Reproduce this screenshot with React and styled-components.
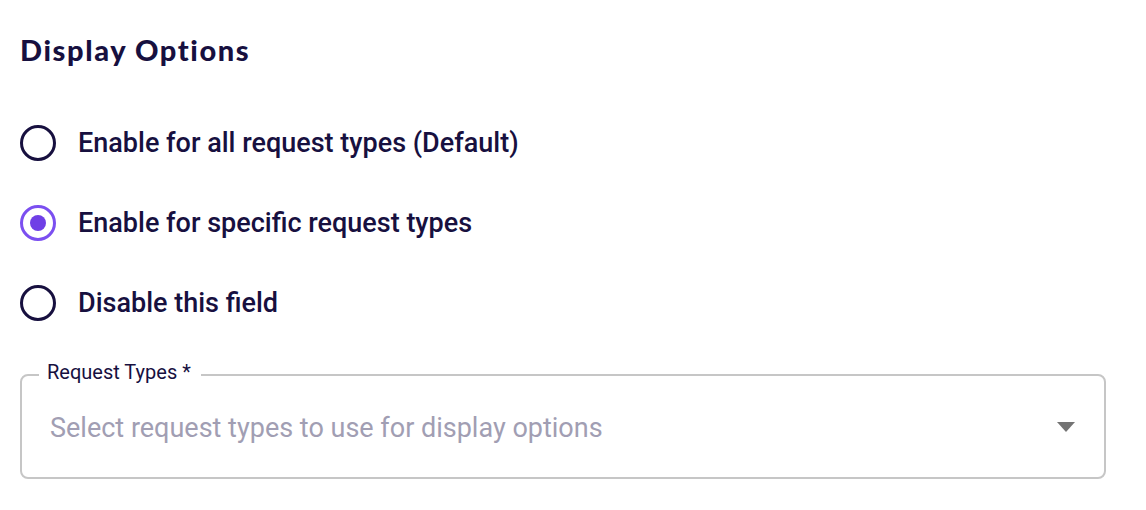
import React, { useState } from "react";
import styled, { createGlobalStyle } from "styled-components";

const GlobalStyle = createGlobalStyle`
  body {
    margin: 0;
    background: #ffffff;
    font-family: Roboto, "Liberation Sans", sans-serif;
  }
`;

const Page = styled.div`
  width: 1146px;
  padding: 30px 40px 0 20px;
  box-sizing: border-box;
`;

const Title = styled.h2`
  margin: 0;
  font-family: Lato, "DejaVu Sans", sans-serif;
  font-weight: 900;
  font-size: 29px;
  letter-spacing: 1.6px;
  line-height: 40px;
  color: #17103f;
`;

const RadioList = styled.div`
  display: flex;
  flex-direction: column;
  gap: 44px;
  margin-top: 55px;
`;

const RadioRow = styled.label`
  display: flex;
  align-items: center;
  gap: 22px;
  height: 36px;
  cursor: pointer;
`;

const RadioCircle = styled.span`
  width: 36px;
  height: 36px;
  box-sizing: border-box;
  border-radius: 50%;
  border: 3px solid ${(p) => (p.$checked ? "#7b4ff0" : "#17103f")};
  display: flex;
  align-items: center;
  justify-content: center;
  flex-shrink: 0;

  &::after {
    content: "";
    width: 16px;
    height: 16px;
    border-radius: 50%;
    background: #6f3fe6;
    display: ${(p) => (p.$checked ? "block" : "none")};
  }
`;

const RadioText = styled.span`
  font-size: 27px;
  font-weight: 500;
  color: #17103f;
`;

const Field = styled.fieldset`
  margin: 38px 0 0 0;
  padding: 0 26px 0 28px;
  height: 120px;
  box-sizing: border-box;
  border: 2px solid #c6c6c6;
  border-radius: 8px;
  display: flex;
  align-items: center;
  justify-content: space-between;
`;

const Legend = styled.legend`
  padding: 0 10px 6px 8px;
  margin-left: -11px;
  font-size: 20px;
  line-height: 26px;
  color: #17103f;
`;

const Placeholder = styled.span`
  font-size: 27px;
  color: #a19eb3;
  margin-top: -13px;
`;

const Arrow = styled.svg`
  width: 20px;
  height: 10px;
  margin-top: -14px;
  margin-right: 2px;
`;

const options = [
  "Enable for all request types (Default)",
  "Enable for specific request types",
  "Disable this field",
];

export default function App() {
  const [selected, setSelected] = useState(1);
  return (
    <>
      <GlobalStyle />
      <Page>
        <Title>Display Options</Title>
        <RadioList>
          {options.map((opt, i) => (
            <RadioRow key={opt} onClick={() => setSelected(i)}>
              <RadioCircle $checked={selected === i} />
              <RadioText>{opt}</RadioText>
            </RadioRow>
          ))}
        </RadioList>
        <Field>
          <Legend>Request Types *</Legend>
          <Placeholder>Select request types to use for display options</Placeholder>
          <Arrow viewBox="0 0 20 10">
            <path d="M1 0 L19 0 L10 10 Z" fill="#747474" />
          </Arrow>
        </Field>
      </Page>
    </>
  );
}
